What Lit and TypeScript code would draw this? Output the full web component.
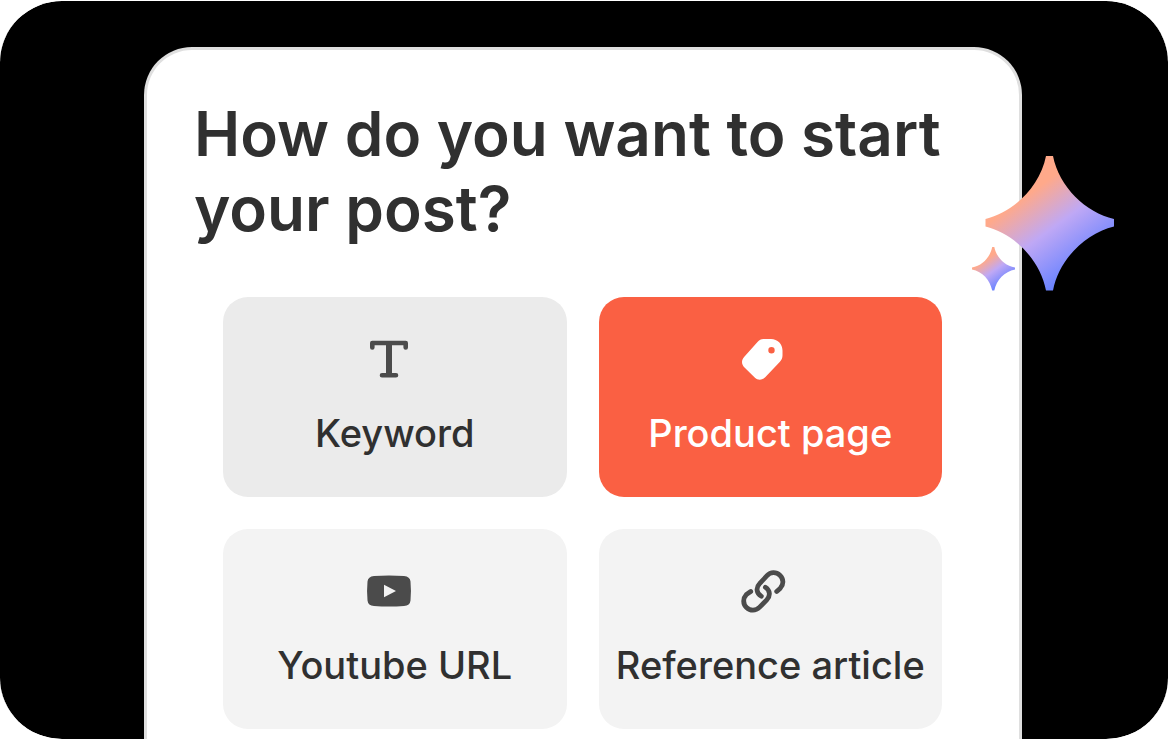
import { LitElement, html, svg, css, type SVGTemplateResult } from "lit";
import { customElement, state, property } from "lit/decorators.js";
import { classMap } from "lit/directives/class-map.js";

interface StartOption {
  id: string;
  label: string;
  tone: "plain" | "strong" | "accent";
  icon: SVGTemplateResult;
}

const textIcon = svg`
  <path d="M7.300 12.500V8H40.700V12.500M17 40.200H31"
    fill="none" stroke="currentColor" stroke-width="4.600" stroke-linecap="round" stroke-linejoin="round"/>
  <path d="M24 8V40" fill="none" stroke="currentColor" stroke-width="6"/>`;

const tagIcon = svg`
  <path fill="currentColor" fill-rule="evenodd"
    d="M23.500 4H31C37.500 4 42.500 9 42.500 15.500V20.500C42.500 23 41.500 25 39.700 26.900L25.200 42.200C22.200 45.400 17.800 45.400 14.700 42.400L4.500 32.500C1.300 29.400 1.200 25.200 4.100 22.100L17.500 7C19.200 5 21 4 23.500 4ZM31.500 12A3.200 3.200 0 1 0 31.500 18.400A3.200 3.200 0 1 0 31.500 12Z"/>`;

const videoIcon = svg`
  <path fill="currentColor" fill-rule="evenodd"
    d="M9 9Q24 7.800 39 9Q45 9.500 45.500 14.500Q46.400 24 45.500 33.500Q45 38.500 39 39Q24 40.200 9 39Q3 38.500 2.500 33.500Q1.600 24 2.500 14.500Q3 9.500 9 9ZM19 17.700V30.300L31 24Z"/>`;

const linkIcon = svg`
  <path fill="none" stroke="currentColor" stroke-width="4.800" stroke-linecap="round"
    d="M21.300 29.300C16.200 26.300 15.800 20.400 19.600 16.600L27 8.700C30.600 4.800 36.200 4.800 39.900 8.300C43.800 12 43.800 17.400 40.300 21.200L36.700 24.500M25.400 20.200C30.200 23.200 30.600 29 26.800 32.900L19.400 40.400C15.700 44.100 10.200 44.100 6.500 40.500C2.800 36.900 2.800 31.400 6.300 27.600L10.700 24.500"/>`;

const OPTIONS: StartOption[] = [
  { id: "keyword", label: "Keyword", tone: "strong", icon: textIcon },
  { id: "product", label: "Product page", tone: "accent", icon: tagIcon },
  { id: "youtube", label: "Youtube URL", tone: "plain", icon: videoIcon },
  { id: "article", label: "Reference article", tone: "plain", icon: linkIcon },
];

@customElement("option-tile")
export class OptionTile extends LitElement {
  @property({ attribute: false }) option!: StartOption;
  @property({ type: Boolean }) selected = false;

  static styles = css`
    :host {
      display: grid;
      min-width: 0;
    }
    .tile {
      display: flex;
      flex-direction: column;
      align-items: center;
      gap: 26px;
      margin: 0;
      padding: 38px 0 40px;
      border: 0;
      border-radius: 25px;
      background: #f3f3f3;
      color: #303030;
      font: 500 38px/48px Inter, "Liberation Sans", sans-serif;
      white-space: nowrap;
      cursor: pointer;
    }
    .strong {
      background: #ebebeb;
    }
    .accent {
      background: #fa6043;
      color: #fff;
    }
    .icon {
      width: 48px;
      height: 48px;
      margin-right: 12px;
      color: #4b4b4b;
    }
    .accent .icon {
      color: #fff;
    }
  `;

  render() {
    const { label, tone, icon } = this.option;
    return html`
      <button
        type="button"
        class=${classMap({ tile: true, [tone]: true })}
        aria-pressed=${this.selected ? "true" : "false"}
      >
        <svg class="icon" viewBox="0 0 48 48" aria-hidden="true">${icon}</svg>
        <span>${label}</span>
      </button>
    `;
  }
}

@customElement("app-root")
export class AppRoot extends LitElement {
  @state() private selected = "product";

  static styles = css`
    :host {
      display: block;
      background: #fff;
      font-family: Inter, "Liberation Sans", sans-serif;
    }
    .stage {
      box-sizing: border-box;
      display: flex;
      min-height: 100vh;
      padding: 46px 146px 0 144px;
      border: solid #fff;
      border-width: 1px 0;
      border-radius: 62px;
      background: #000;
      background-clip: padding-box;
    }
    .panel {
      position: relative;
      box-sizing: border-box;
      flex: 1;
      min-width: 0;
      padding: 46px 47px 10px;
      border: 3px solid #dfdfdf;
      border-bottom: 0;
      border-radius: 48px 48px 0 0;
      background: #fff;
    }
    .title {
      margin: 0;
      color: #303030;
      font-size: 62px;
      font-weight: 600;
      line-height: 75px;
    }
    .options {
      display: grid;
      grid-template-columns: 1fr 1fr;
      gap: 32px;
      margin: 51px 30px 0 29px;
    }
    .sparkles {
      position: absolute;
      top: 105px;
      right: -96px;
      width: 143px;
      height: 140px;
    }
  `;

  render() {
    return html`
      <main class="stage">
        <section class="panel" aria-labelledby="title">
          <h1 class="title" id="title">How do you want to start your post?</h1>
          <div class="options" role="group" aria-labelledby="title">
            ${OPTIONS.map(
              (option) => html`
                <option-tile
                  .option=${option}
                  .selected=${option.id === this.selected}
                  @click=${() => (this.selected = option.id)}
                ></option-tile>
              `
            )}
          </div>
          <svg class="sparkles" viewBox="0 0 143 140" aria-hidden="true">
            <defs>
              <linearGradient id="glow" x1="0.250" y1="0.160" x2="0.720" y2="0.840">
                <stop offset="0.180" stop-color="#ffa98a" />
                <stop offset="0.560" stop-color="#bfa8f5" />
                <stop offset="1" stop-color="#6c84ff" />
              </linearGradient>
            </defs>
            <path
              fill="url(#glow)"
              d="M74 1H81C87 32 114 57.500 142 64V71.500C114 78 87 104 81 135.500H74C68 104 41 78 13.500 71.500V64C41 57.500 68 32 74 1Z"
            />
            <path
              fill="url(#glow)"
              d="M20.200 92H22.300C24.500 102.500 32.500 110.500 43 112.500V114.500C32.500 116.500 24.500 125 22.300 135.500H20.200C18 125 10.500 116.500 0 114.500V112.500C10.500 110.500 18 102.500 20.200 92Z"
            />
          </svg>
        </section>
      </main>
    `;
  }
}
